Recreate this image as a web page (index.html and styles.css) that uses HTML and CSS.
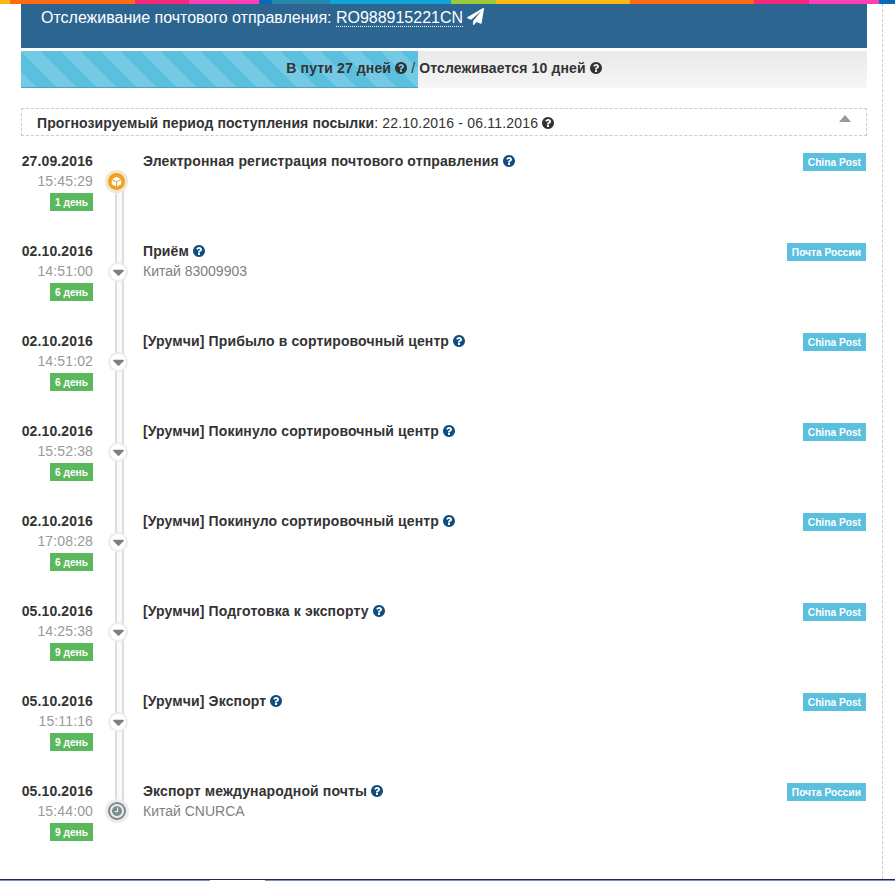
FILE: index.html
```html
<!DOCTYPE html>
<html lang="ru">
<head>
<meta charset="utf-8">
<title>Отслеживание почтового отправления</title>
<link rel="stylesheet" href="styles.css">
</head>
<body>
<svg class="defs" width="0" height="0" aria-hidden="true">
  <symbol id="q" viewBox="128 128 1536 1536"><path d="M1024 1376v-192q0-14-9-23t-23-9h-192q-14 0-23 9t-9 23v192q0 14 9 23t23 9h192q14 0 23-9t9-23zm256-672q0-88-55.5-163t-138.5-116-170-41q-243 0-371 213-15 24 8 42l132 100q7 6 19 6 16 0 25-12 53-68 86-92 34-24 86-24 48 0 85.5 26t37.5 59q0 38-20 61t-68 45q-63 28-115.5 86.5t-52.5 125.5v36q0 14 9 23t23 9h192q14 0 23-9t9-23q0-19 21.5-49.5t54.5-49.5q32-18 49-28.5t46-35 44.5-48 28-60.5 12.5-81zm384 192q0 209-103 385.5t-279.5 279.5-385.5 103-385.5-103-279.5-279.5-103-385.5 103-385.5 279.5-279.5 385.5-103 385.5 103 279.5 279.5 103 385.5z"/></symbol>
  <symbol id="caret" viewBox="0 0 1792 1792"><path d="M1408 704q0 26-19 45l-448 448q-19 19-45 19t-45-19l-448-448q-19-19-19-45t19-45 45-19h896q26 0 45 19t19 45z"/></symbol>
</svg>
<div class="stripe"></div>
<main class="frame">
  <header class="head">Отслеживание почтового отправления: <span class="track">RO988915221CN</span>
    <svg class="plane" viewBox="0 0 1792 1792"><path d="M1764 11q33 24 27 64l-256 1536q-5 29-32 45-14 8-31 8-11 0-24-5l-453-185-242 295q-18 23-49 23-13 0-22-4-19-7-30.5-23.5t-11.5-36.5v-349l864-1059-1069 925-395-162q-37-14-40-55-2-40 32-59l1664-960q15-9 32-9 20 0 36 11z"/></svg>
  </header>
  <div class="progress">
    <div class="progress-fill"></div>
    <div class="progress-text">В пути 27 дней <svg class="q"><use href="#q"/></svg> <span class="sep">/</span> Отслеживается 10 дней <svg class="q"><use href="#q"/></svg></div>
  </div>
  <div class="forecast">
    <span><b>Прогнозируемый период поступления посылки</b><span class="range">: 22.10.2016 - 06.11.2016</span> <svg class="q"><use href="#q"/></svg></span>
    <span class="collapse"></span>
  </div>
  <ol class="events">
    <li class="event">
      <div class="when"><b>27.09.2016</b><span class="time">15:45:29</span><span class="days">1 день</span></div>
      <div class="rail"><span class="dot dot-first"><svg viewBox="0 0 16 16"><path d="M8 2.2 13.4 5 8 7.8 2.6 5z"/><path d="M2.2 6 7.4 8.7v5.4L2.2 11.3z"/><path d="M13.8 6 8.6 8.7v5.4l5.2-2.8z"/></svg></span></div>
      <div class="what"><b>Электронная регистрация почтового отправления</b> <svg class="q q-blue"><use href="#q"/></svg></div>
      <span class="tag">China Post</span>
    </li>
    <li class="event">
      <div class="when"><b>02.10.2016</b><span class="time">14:51:00</span><span class="days">6 день</span></div>
      <div class="rail"><span class="dot"><svg><use href="#caret"/></svg></span></div>
      <div class="what"><b>Приём</b> <svg class="q q-blue"><use href="#q"/></svg><span class="place">Китай 83009903</span></div>
      <span class="tag">Почта России</span>
    </li>
    <li class="event">
      <div class="when"><b>02.10.2016</b><span class="time">14:51:02</span><span class="days">6 день</span></div>
      <div class="rail"><span class="dot"><svg><use href="#caret"/></svg></span></div>
      <div class="what"><b>[Урумчи] Прибыло в сортировочный центр</b> <svg class="q q-blue"><use href="#q"/></svg></div>
      <span class="tag">China Post</span>
    </li>
    <li class="event">
      <div class="when"><b>02.10.2016</b><span class="time">15:52:38</span><span class="days">6 день</span></div>
      <div class="rail"><span class="dot"><svg><use href="#caret"/></svg></span></div>
      <div class="what"><b>[Урумчи] Покинуло сортировочный центр</b> <svg class="q q-blue"><use href="#q"/></svg></div>
      <span class="tag">China Post</span>
    </li>
    <li class="event">
      <div class="when"><b>02.10.2016</b><span class="time">17:08:28</span><span class="days">6 день</span></div>
      <div class="rail"><span class="dot"><svg><use href="#caret"/></svg></span></div>
      <div class="what"><b>[Урумчи] Покинуло сортировочный центр</b> <svg class="q q-blue"><use href="#q"/></svg></div>
      <span class="tag">China Post</span>
    </li>
    <li class="event">
      <div class="when"><b>05.10.2016</b><span class="time">14:25:38</span><span class="days">9 день</span></div>
      <div class="rail"><span class="dot"><svg><use href="#caret"/></svg></span></div>
      <div class="what"><b>[Урумчи] Подготовка к экспорту</b> <svg class="q q-blue"><use href="#q"/></svg></div>
      <span class="tag">China Post</span>
    </li>
    <li class="event">
      <div class="when"><b>05.10.2016</b><span class="time">15:11:16</span><span class="days">9 день</span></div>
      <div class="rail"><span class="dot"><svg><use href="#caret"/></svg></span></div>
      <div class="what"><b>[Урумчи] Экспорт</b> <svg class="q q-blue"><use href="#q"/></svg></div>
      <span class="tag">China Post</span>
    </li>
    <li class="event event-last">
      <div class="when"><b>05.10.2016</b><span class="time">15:44:00</span><span class="days">9 день</span></div>
      <div class="rail"><span class="dot dot-last"><svg viewBox="128 128 1536 1536"><path d="M1024 544v448q0 14-9 23t-23 9h-320q-14 0-23-9t-9-23v-64q0-14 9-23t23-9h224v-352q0-14 9-23t23-9h64q14 0 23 9t9 23zm416 352q0-148-73-273t-198-198-273-73-273 73-198 198-73 273 73 273 198 198 273 73 273-73 198-198 73-273zm224 0q0 209-103 385.5t-279.5 279.5-385.5 103-385.5-103-279.5-279.5-103-385.5 103-385.5 279.5-279.5 385.5-103 385.5 103 279.5 279.5 103 385.5z"/></svg></span></div>
      <div class="what"><b>Экспорт международной почты</b> <svg class="q q-blue"><use href="#q"/></svg><span class="place">Китай CNURCA</span></div>
      <span class="tag">Почта России</span>
    </li>
  </ol>
</main>
<div class="bottom"></div>
</body>
</html>
```

FILE: styles.css
```css
* { box-sizing: border-box; }
html, body { margin: 0; padding: 0; background: #fff; }
body {
  height: 881px;
  overflow: hidden;
  font-family: "Liberation Sans", Arial, sans-serif;
  font-size: 14px;
  line-height: 20px;
  color: #333;
}
.defs { position: absolute; }
b { font-weight: 700; }
.stripe {
  height: 4px;
  background: linear-gradient(to right,
    #fdb913 0 10px, #ff6a13 10px 135px, #f5287b 135px 189px, #ff3fb4 189px 259px,
    #0a6ab3 259px 272px, #2487ab 272px 330px, #0ea5d8 330px 451px, #9bc93a 451px 496px,
    #fdb913 496px 630px, #ff6a13 630px 754px, #f5287b 754px 809px, #ff3fb4 809px 879px,
    #0a6ab3 879px 895px);
}
.frame {
  width: 883px;
  height: 875px;
  padding: 0 15px 0 21px;
  border-right: 1px dashed #ccc;
}
.head {
  height: 44px;
  padding-left: 20px;
  background: #2d6591;
  color: #fff;
  font-size: 16px;
  line-height: 27px;
  letter-spacing: -.01px;
}
.track { border-bottom: 1px dotted #fff; }
.plane { width: 17px; height: 17px; fill: #fff; vertical-align: -2px; }
.progress {
  position: relative;
  height: 37px;
  margin-top: 3px;
  background: linear-gradient(#e9e9e9, #f6f6f6);
}
.progress-fill {
  position: absolute;
  left: 0; top: 0; bottom: 0;
  width: 397px;
  border-bottom: 1px solid #4ba3c4;
  background-color: #5bc0de;
  background-image: linear-gradient(45deg, #74cae4 25%, transparent 25%, transparent 50%, #74cae4 50%, #74cae4 75%, transparent 75%);
  background-size: 40px 40px;
}
.progress-text {
  position: relative;
  height: 37px;
  text-align: center;
  font-size: 14px;
  font-weight: 700;
  line-height: 35px;
  letter-spacing: .13px;
}
.sep { font-weight: 400; }
.q { width: 12px; height: 12px; fill: #333; vertical-align: -1px; }
.q-blue { fill: #0f4d80; }
.forecast {
  display: flex;
  justify-content: space-between;
  height: 28px;
  margin-top: 20px;
  padding: 4px 15px;
  border: 1px dashed #ccc;
  font-size: 14px;
  letter-spacing: .1px;
}
.range { letter-spacing: .19px; }
.collapse {
  width: 0; height: 0;
  margin-top: 2px;
  border-left: 6px solid transparent;
  border-right: 6px solid transparent;
  border-bottom: 7px solid #999;
}
.events { list-style: none; margin: 0; padding: 15px 0 0; }
.event {
  display: flex;
  align-items: flex-start;
  height: 90px;
  letter-spacing: .13px;
}
.when {
  display: flex;
  flex-direction: column;
  align-items: flex-end;
  flex: 0 0 72px;
  min-width: 0;
}
.time { color: #999; }
.days {
  margin-top: 2px;
  height: 18px;
  padding: 0 5px;
  background: #5cb85c;
  color: #fff;
  font-size: 10.2px;
  font-weight: 700;
  line-height: 19px;
  letter-spacing: 0;
}
.rail {
  position: relative;
  flex: 0 0 50px;
  height: 90px;
}
.rail::before {
  content: "";
  position: absolute;
  left: 22px;
  top: 30px;
  width: 5px;
  height: 90px;
  border-left: 2px solid #ddd;
  border-right: 2px solid #ddd;
  background: #fafafa;
}
.event-last .rail::before { display: none; }
.dot {
  position: absolute;
  left: 15px;
  top: 21px;
  width: 20px;
  height: 20px;
  display: flex;
  align-items: center;
  justify-content: center;
  border-radius: 50%;
  border: 2px solid #ececec;
  background: #fff;
  z-index: 1;
}
.dot svg { flex: none; width: 19px; height: 19px; fill: #7f7f7f; }
.dot-first { left: 12px; top: 19px; width: 23px; height: 23px; border-width: 3px; border-color: #f2e6d0; background: #f0a020; }
.dot-first svg { width: 13px; height: 13px; fill: #fff; }
.dot-last { left: 12px; top: 18px; width: 24px; height: 24px; border-width: 3px; background: #7e8a8a; }
.dot-last svg { width: 14px; height: 14px; fill: #e8ecec; }
.what { flex: 1; }
.place { display: block; color: #808080; letter-spacing: 0; }
.tag {
  height: 18px;
  margin: 2px 1px 0 0;
  padding: 0 5px;
  background: #5bc0de;
  color: #fff;
  font-size: 10.2px;
  font-weight: 700;
  line-height: 19px;
  letter-spacing: 0;
}
.bottom {
  height: 2px;
  border-top: 1px solid #1c2a50;
  background: linear-gradient(to right, #7f93bd 0 210px, #fff 210px 265px, #7f93bd 265px);
}
```
